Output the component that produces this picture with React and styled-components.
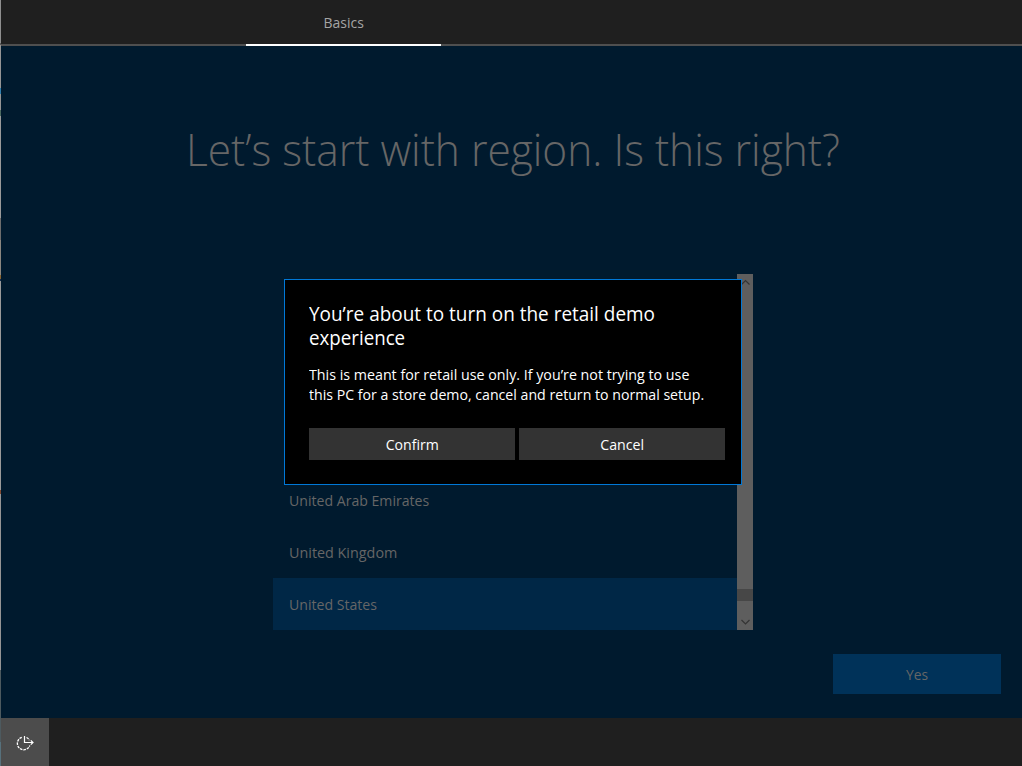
import React from "react";
import styled, { createGlobalStyle } from "styled-components";

const GlobalStyle = createGlobalStyle`
  * { box-sizing: border-box; }
  body {
    margin: 0;
    background: #001a2e;
    font-family: "Open Sans", "Noto Sans", sans-serif;
    font-size: 15px;
    overflow: hidden;
  }
  button { font: inherit; color: inherit; border: 0; padding: 0; border-radius: 0; }
`;

const Screen = styled.div`
  position: relative;
  display: flex;
  width: 1022px;
  height: 766px;
  background: #001a2e;
`;

const Edge = styled.div`
  width: 1px;
  background: linear-gradient(
    #8f8f8f 0 43px, #5a5a5a 43px 45px, #959595 45px 88px, #2f7fae 88px 94px,
    #959595 94px 110px, #4c6b60 110px 116px, #9a9a9a 116px 218px, #6d6d6d 218px 240px,
    #8b8780 240px 275px, #8a6530 275px 279px, #142f50 279px 281px, #9a9a9a 281px 490px,
    #844a30 490px 494px, #959595 494px 670px, #4d5a5f 670px 742px, #57717c 742px
  );
`;

const Window = styled.div`
  flex: 1;
  display: flex;
  flex-direction: column;
`;

const TabBar = styled.header`
  display: flex;
  height: 46px;
  padding-left: 245px;
  background: linear-gradient(#1f1f1f 44px, #4f4f4f 44px);
`;

const Tab = styled.div`
  width: 195px;
  height: 46px;
  border-bottom: 2px solid #fff;
  color: #a5a5a5;
  text-align: center;
  line-height: 45px;
`;

/* Condenses a line of text horizontally; $w is the width factor. */
const Label = styled.span`
  display: inline-block;
  white-space: nowrap;
  transform: scaleX(${(p) => p.$w});
  transform-origin: ${(p) => (p.$center ? "center" : "left")};
`;

const Content = styled.main`
  height: 672px;
  display: flex;
  flex-direction: column;
  color: #666;
`;

const Heading = styled.h1`
  margin: 70px 0 0 185px;
  height: 158px;
  font-size: 45px;
  font-weight: 300;
  line-height: 66px;
`;

const RegionList = styled.div`
  display: flex;
  width: 480px;
  height: 356px;
  margin-left: 272px;
`;

const Regions = styled.div`
  flex: 1;
  display: flex;
  flex-direction: column;
  justify-content: flex-end;
`;

const Region = styled.div`
  height: 52px;
  padding-left: 16px;
  line-height: 53px;
  background: ${(p) => (p.$selected ? "#002746" : "transparent")};
`;

const ScrollBar = styled.div`
  width: 16px;
  display: flex;
  flex-direction: column;
  justify-content: space-between;
  background: linear-gradient(#5e5e5e 315px, #474747 315px 327px, #5e5e5e 327px);
`;

const Arrow = styled.svg`
  display: block;
  width: 16px;
  height: 17px;
  fill: none;
  stroke: #343434;
  stroke-width: 1.2;
`;

const Actions = styled.div`
  display: flex;
  justify-content: flex-end;
  padding: 24px 21px 0 0;
`;

const YesButton = styled.button`
  width: 168px;
  height: 40px;
  background: #003259;
`;

const TaskBar = styled.footer`
  height: 48px;
  background: #1f1f1f;
`;

const EaseButton = styled.button`
  display: block;
  width: 48px;
  height: 48px;
  background: #4c4c4c;
`;

const EaseIcon = styled.svg`
  display: block;
  width: 48px;
  height: 48px;
  fill: none;
  stroke: #fff;
`;

const Dialog = styled.section`
  position: absolute;
  left: 284px;
  top: 279px;
  width: 458px;
  height: 206px;
  padding: 22px 16px 24px 24px;
  border: 1px solid #0078d7;
  background: #000;
  color: #fff;
`;

const DialogTitle = styled.h2`
  margin: 0;
  font-size: 19.5px;
  font-weight: 400;
  line-height: 24px;
`;

const DialogText = styled.p`
  margin: 14px 0 24px;
  line-height: 20px;
`;

const DialogActions = styled.div`
  display: grid;
  grid-template-columns: 1fr 1fr;
  gap: 4px;
`;

const DialogButton = styled.button`
  height: 32px;
  background: #333;
`;

export default function App() {
  return (
    <Screen>
      <GlobalStyle />
      <Edge />
      <Window>
        <TabBar>
          <Tab><Label $center $w={0.93}>Basics</Label></Tab>
        </TabBar>
        <Content>
          <Heading><Label $w={0.943}>Let’s start with region. Is this right?</Label></Heading>
          <RegionList>
            <Regions>
              <Region><Label $w={0.94}>United Arab Emirates</Label></Region>
              <Region><Label $w={0.957}>United Kingdom</Label></Region>
              <Region $selected><Label $w={0.94}>United States</Label></Region>
            </Regions>
            <ScrollBar>
              <Arrow viewBox="0 0 16 17"><path d="M4.5 10.5 8.5 6.5 12.5 10.5" /></Arrow>
              <Arrow viewBox="0 0 16 17"><path d="M4.5 7 8.5 11 12.5 7" /></Arrow>
            </ScrollBar>
          </RegionList>
          <Actions>
            <YesButton><Label $center $w={0.92}>Yes</Label></YesButton>
          </Actions>
        </Content>
        <TaskBar>
          <EaseButton aria-label="Ease of access">
            <EaseIcon viewBox="0 0 48 48">
              <path d="M23.5 18v6.5H32M29.8 22.3l2.2 2.2-2.2 2.2" strokeWidth="1.2" />
              <path
                d="M20.8 19.3A6.4 6.4 0 1 0 28.8 27.5M25.5 19.5A6.4 6.4 0 0 1 28.4 22.3"
                strokeWidth="1.3"
                strokeDasharray="2.6 0.9"
              />
            </EaseIcon>
          </EaseButton>
        </TaskBar>
      </Window>
      <Dialog role="dialog">
        <DialogTitle>
          <Label $w={0.972}>You’re about to turn on the retail demo</Label><br />
          <Label $w={0.96}>experience</Label>
        </DialogTitle>
        <DialogText>
          <Label $w={0.95}>This is meant for retail use only. If you’re not trying to use</Label><br />
          <Label $w={0.943}>this PC for a store demo, cancel and return to normal setup.</Label>
        </DialogText>
        <DialogActions>
          <DialogButton><Label $center $w={0.94}>Confirm</Label></DialogButton>
          <DialogButton><Label $center $w={0.945}>Cancel</Label></DialogButton>
        </DialogActions>
      </Dialog>
    </Screen>
  );
}
